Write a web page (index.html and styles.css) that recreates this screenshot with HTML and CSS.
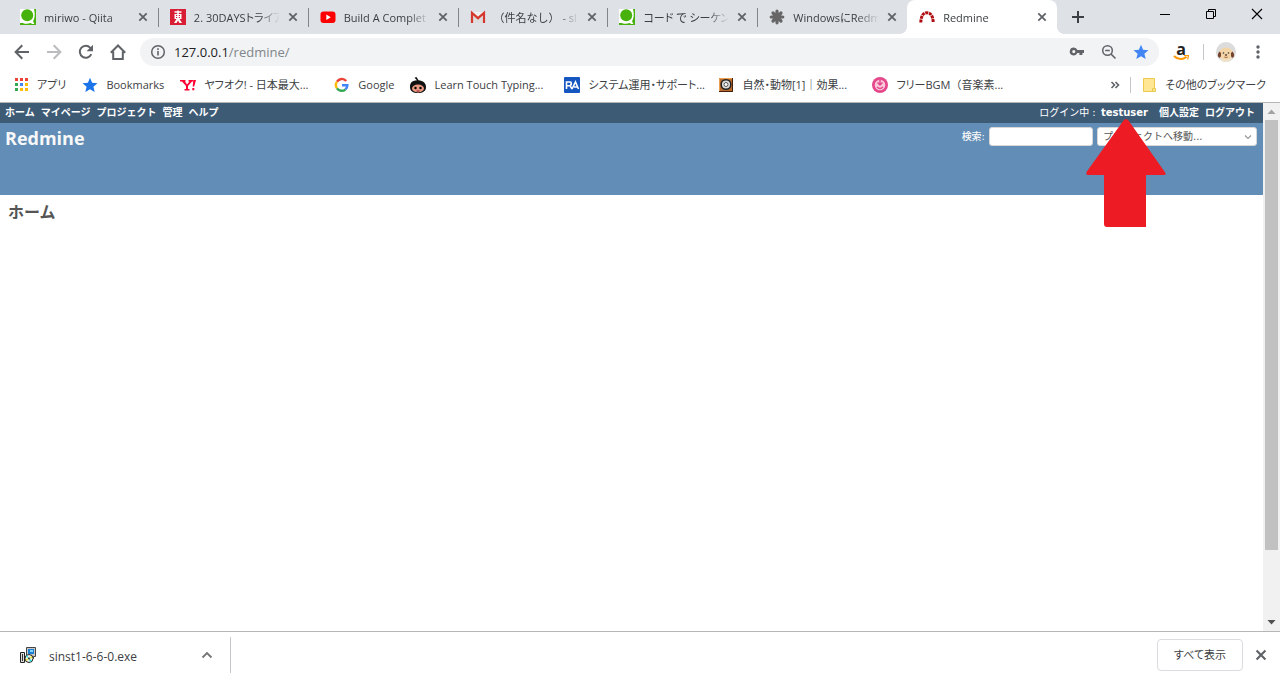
FILE: index.html
```html
<!DOCTYPE html>
<html lang="ja">
<head>
<meta charset="utf-8">
<title>Redmine</title>
<link rel="stylesheet" href="styles.css">
</head>
<body>
<svg class="defs" aria-hidden="true">
  <symbol id="x" viewBox="0 0 10 10"><path d="M1.3 1.3l7.4 7.4M8.7 1.3L1.3 8.7" fill="none" stroke="currentColor" stroke-width="1.8"/></symbol>
  <symbol id="qiita" viewBox="0 0 16 16"><path fill="#fff" d="M0 0h16v16H0z"/><circle cx="7.2" cy="6.2" r="6" fill="#47b20e"/><path fill="#47b20e" d="M14 0h2v16H0v-2h10.500l2 1 1.500-.8-1-2C14.500 10 15.500 6 14 0z"/><path fill="#fff" d="M1 12.500c4 2.500 8 2 10.500-.8l3 3.300h-2l-1.500-1.200c-4 1.800-8 1-10-1.300z"/></symbol>
  <symbol id="star" viewBox="0 0 16 16"><path d="M8 .8l2.100 4.900 5.400.5-4.100 3.500 1.300 5.300L8 12.200 3.300 15l1.300-5.300L.5 6.200l5.400-.5z"/></symbol>
</svg>

<header class="browser">
  <div class="tabstrip">
    <div class="tabs">
      <div class="tab"><svg class="icon"><use href="#qiita"/></svg><span class="tab-title">miriwo - Qiita</span><button class="close" aria-label="閉じる"><svg><use href="#x"/></svg></button></div>
      <div class="tab"><svg class="icon" viewBox="0 0 16 16"><path fill="#d81e34" d="M0 0h16v16H0z"/><path d="M8 1.500v5M4.500 3h7" fill="none" stroke="#fff" stroke-width="1.600"/><path fill="#fff" d="M4.500 5h7v5h-2l2.500 4h-2.500L8 11.500 6.500 14H4l2.500-4h-2z"/><path d="M6 6.500h1.200M8.800 6.500H10M6 8.500h1.200M8.800 8.500H10" stroke="#d81e34"/></svg><span class="tab-title">2. 30DAYSトライア</span><button class="close" aria-label="閉じる"><svg><use href="#x"/></svg></button></div>
      <div class="tab"><svg class="icon" viewBox="0 0 16 16"><rect x=".5" y="2.500" width="15" height="11.500" rx="3" fill="#f00"/><path fill="#fff" d="M6.300 5.500l4.500 2.700-4.500 2.700z"/></svg><span class="tab-title">Build A Complet</span><button class="close" aria-label="閉じる"><svg><use href="#x"/></svg></button></div>
      <div class="tab"><svg class="icon" viewBox="0 0 16 16"><path fill="#eee" d="M1 3h14v11H1z"/><path d="M3 5l5 4.500L13 5v9H3z" fill="#ddd"/><path d="M2 14V4l6 5.200L14 4v10" fill="none" stroke="#d5382f" stroke-width="2.200"/></svg><span class="tab-title"><span class="wide">（件名なし）</span> - sl</span><button class="close" aria-label="閉じる"><svg><use href="#x"/></svg></button></div>
      <div class="tab"><svg class="icon"><use href="#qiita"/></svg><span class="tab-title">コード で シーケンス</span><button class="close" aria-label="閉じる"><svg><use href="#x"/></svg></button></div>
      <div class="tab"><svg class="icon" viewBox="0 0 16 16"><path d="M8 8V2.200M8 8v5.800M8 8H2.200M8 8h5.800M8 8L4 4M8 8l4-4M8 8l-4 4M8 8l4 4" stroke="#666" stroke-width="3.200" stroke-linecap="round"/></svg><span class="tab-title">WindowsにRedm</span><button class="close" aria-label="閉じる"><svg><use href="#x"/></svg></button></div>
      <div class="tab active"><svg class="icon" viewBox="0 0 16 16"><path d="M1.800 13.500C2 7.500 4 3.700 8 3.700s6 3.800 6.200 9.800" fill="none" stroke="#b00d10" stroke-width="3" stroke-dasharray="3 .7"/></svg><span class="tab-title">Redmine</span><button class="close" aria-label="閉じる"><svg><use href="#x"/></svg></button></div>
    </div>
    <button class="new-tab" aria-label="新しいタブ"><svg viewBox="0 0 12 12"><path d="M6 0v12M0 6h12" stroke="#3c4043" stroke-width="2"/></svg></button>
    <div class="window-buttons">
      <button aria-label="最小化"><svg viewBox="0 0 12 12"><path d="M1 6.500h10" stroke="#000"/></svg></button>
      <button aria-label="元に戻す"><svg viewBox="0 0 12 12"><path d="M1.500 3.500h7v7h-7zM3.500 3.500v-2h7v7h-2" fill="none" stroke="#000"/></svg></button>
      <button aria-label="ウィンドウを閉じる"><svg viewBox="0 0 12 12"><path d="M1 1l10 10M11 1L1 11" stroke="#000" stroke-width="1.100"/></svg></button>
    </div>
  </div>

  <div class="toolbar">
    <div class="nav">
      <button aria-label="戻る"><svg viewBox="0 0 16 16"><path d="M15 8H2M8.300 1.300L1.600 8l6.700 6.700" fill="none" stroke="#5f6368" stroke-width="2"/></svg></button>
      <button aria-label="進む"><svg viewBox="0 0 16 16"><path d="M1 8h13M7.700 1.300L14.400 8l-6.700 6.700" fill="none" stroke="#babcbe" stroke-width="2"/></svg></button>
      <button aria-label="再読み込み"><svg viewBox="0 0 16 16"><path d="M13.300 10.200A6 6 0 1 1 12.300 3.800L13 4.600" fill="none" stroke="#5f6368" stroke-width="2"/><path d="M15 .8v6.400H8.600z" fill="#5f6368"/></svg></button>
      <button aria-label="ホーム"><svg viewBox="0 0 16 16"><path d="M.8 8.700L8 1.500l7.200 7.200M3.200 7.500V15h9.600V7.500" fill="none" stroke="#5f6368" stroke-width="2"/></svg></button>
    </div>
    <div class="omnibox">
      <svg class="info" viewBox="0 0 16 16"><circle cx="8" cy="8" r="6.300" fill="none" stroke="#5f6368" stroke-width="1.500"/><path d="M8 7v4.500M8 4.300v1.600" stroke="#5f6368" stroke-width="1.600"/></svg>
      <span class="url"><span class="host">127.0.0.1</span>/redmine/</span>
      <button aria-label="パスワード"><svg viewBox="0 0 16 16"><path d="M4.800 3.500a4 4 0 1 0 3.600 5.600h2v2h3v-2H15V6H8.400a4 4 0 0 0-3.600-2.500zm0 2.500a1.600 1.600 0 1 1 0 3.200 1.600 1.600 0 0 1 0-3.200z" fill="#5f6368"/></svg></button>
      <button aria-label="ズーム"><svg viewBox="0 0 16 16"><circle cx="6.500" cy="6.500" r="4.800" fill="none" stroke="#5f6368" stroke-width="1.500"/><path d="M4.200 6.500h4.600M10 10l4.500 4.500" stroke="#5f6368" stroke-width="1.600"/></svg></button>
      <button aria-label="ブックマーク"><svg fill="#4285f4"><use href="#star"/></svg></button>
    </div>
    <button class="extension" aria-label="Amazon"><span>a</span><svg viewBox="0 0 16 6"><path d="M1 1c4 4 9 4 12.500.8" fill="none" stroke="#f90" stroke-width="2"/><path d="M11 .5l4.500-.2-.8 4.200" fill="none" stroke="#f90" stroke-width="1.200"/></svg></button>
    <span class="divider"></span>
    <button class="avatar" aria-label="プロフィール"><svg viewBox="0 0 20 20"><circle cx="10" cy="10" r="10" fill="#dcdcdc"/><path d="M4 16h12l-2 3.200a10 10 0 0 1-8 0z" fill="#eee2cc"/><ellipse cx="10" cy="11.500" rx="7" ry="6" fill="#f3d5a8"/><path d="M3.500 9.500c-2 2-2.200 5-.5 6s2.300-2 2-4.500zM16.500 9.500c2 2 2.200 5 .5 6s-2.300-2-2-4.500z" fill="#75432a"/><circle cx="7.500" cy="11" r=".8" fill="#333"/><circle cx="12.500" cy="11" r=".8" fill="#333"/><ellipse cx="10" cy="13" rx="1.200" ry=".8" fill="#3b2922"/><path d="M8.300 15q1.700 1 3.400 0" fill="none" stroke="#a0683c"/></svg></button>
    <button class="menu" aria-label="メニュー"><svg viewBox="0 0 16 16" fill="#5f6368"><circle cx="8" cy="3" r="1.700"/><circle cx="8" cy="8" r="1.700"/><circle cx="8" cy="13" r="1.700"/></svg></button>
  </div>

  <nav class="bookmarks">
    <a href="#"><svg class="icon" viewBox="0 0 16 16"><path fill="#ea4335" d="M2 1h3v3H2zM7 1h3v3H7zM12 1h3v3h-3z"/><path fill="#34a853" d="M2 6h3v3H2zM2 11h3v3H2z"/><path fill="#4285f4" d="M7 6h3v3H7z"/><path fill="#fbbc05" d="M12 6h3v3h-3zM7 11h3v3H7zM12 11h3v3h-3z"/></svg><span>アプリ</span></a>
    <a href="#"><svg class="icon" fill="#1a73e8"><use href="#star"/></svg><span>Bookmarks</span></a>
    <a href="#" class="cut"><svg class="icon" viewBox="0 0 16 16" fill="#f03"><path d="M0 3h5.500v1.500H5l2 3 2.500-3H8.500V3H13v1.500h-1L8 9v3h1.500v1.500h-5V12H6V9L2 4.500H0zM13.300 3H16l-1.800 6.500h-1.500zM12.300 11h2v2.200h-2z"/></svg><span>ヤフオク! - 日本最大...</span></a>
    <a href="#"><svg class="icon" viewBox="0 0 16 16" fill="none" stroke-width="2.400"><path d="M3 4.700A5.600 5.600 0 0 1 12.200 4" stroke="#ea4335"/><path d="M3 4.700a5.600 5.600 0 0 0 0 6.600" stroke="#fbbc05"/><path d="M3 11.300a5.600 5.600 0 0 0 8.500 1" stroke="#34a853"/><path d="M11.500 12.300A5.600 5.600 0 0 0 13.400 8.200H8" stroke="#4285f4"/></svg><span>Google</span></a>
    <a href="#" class="cut"><svg class="icon" viewBox="0 0 16 16"><path d="M0 10C0 5 3 3.500 7 3.300L4.500.8 6.500 0l2 3.200C13 3.500 16 6 16 10c0 4-3 6-8 6s-8-2-8-6z" fill="#111"/><ellipse cx="8" cy="11.500" rx="6" ry="3.900" fill="#e89a80"/><circle cx="5.500" cy="11" r="1.200"/><circle cx="10.500" cy="11" r="1.200"/><path d="M6.500 14h3" stroke="#813"/></svg><span>Learn Touch Typing...</span></a>
    <a href="#" class="cut"><svg class="icon" viewBox="0 0 16 16"><rect width="16" height="16" rx="1" fill="#1556c0"/><path d="M2.500 12V5h4.200q1.500 2-.5 3.700H3M6 8.700L8 12M8 12l3.500-7 3 7M10 10h4" fill="none" stroke="#fff" stroke-width="1.600"/></svg><span>システム運用・サポート...</span></a>
    <a href="#" class="cut"><svg class="icon" viewBox="0 0 16 16"><path fill="#b8692b" d="M1 1h14v14H1z"/><path d="M1.500 15V1.500H15" fill="none" stroke="#e8a050"/><path d="M1 14.500h13.500V1" fill="none" stroke="#42200c"/><circle cx="8" cy="7.500" r="4.800" fill="#ddd" stroke="#222" stroke-width="1.500"/><circle cx="8" cy="7.500" r="2" fill="#fff" stroke="#555"/></svg><span>自然・動物[1]｜効果...</span></a>
    <a href="#" class="cut"><svg class="icon" viewBox="0 0 16 16"><circle cx="8" cy="8" r="8" fill="#e5488a"/><circle cx="8" cy="8" r="5.300" fill="#f9c9dc"/><path d="M8 3v4M5.500 5.500L8 8l2.500-2.500M5 10q3 3 6 0" fill="none" stroke="#e5488a" stroke-width="1.500"/></svg><span>フリーBGM<span class="wide">（</span>音楽素...</span></a>
    <span class="spacer"></span>
    <button class="more" aria-label="その他"><svg viewBox="0 0 10 10"><path d="M1.500 2l3 3-3 3M5.500 2l3 3-3 3" fill="none" stroke="#5f6368" stroke-width="1.600"/></svg></button>
    <span class="divider"></span>
    <a href="#"><svg class="icon" viewBox="0 0 16 16"><path d="M2.500 1.500h11v10h1v3h-12z" fill="#ffe694" stroke="#edc94e"/><path d="M11.500 14v-2.500h2" fill="none" stroke="#edc94e"/></svg><span>その他のブックマーク</span></a>
  </nav>
</header>

<div class="viewport">
  <div class="page">
    <div class="top-menu">
      <nav><a href="#">ホーム</a><a href="#">マイページ</a><a href="#">プロジェクト</a><a href="#">管理</a><a href="#">ヘルプ</a></nav>
      <div class="account"><span>ログイン中 : <a class="user" href="#">testuser<svg class="arrow" viewBox="0 0 80 108" aria-hidden="true"><path d="M40 0q1.500 0 2.500 1.500L79.500 54q.5 2-1 2H60v52H21q-3 0-3-3V56H1.500Q0 56 .5 53L37.500 1.500Q38.500 0 40 0z" fill="#ed1c24"/></svg></a></span><nav><a href="#">個人設定</a><a href="#">ログアウト</a></nav></div>
    </div>
    <div class="header">
      <h1>Redmine</h1>
      <form class="quick-search">
        <label for="q">検索:</label>
        <input id="q" type="text">
        <select aria-label="プロジェクト"><option>プロジェクトへ移動...</option></select>
      </form>
    </div>
    <main><h2>ホーム</h2></main>
  </div>
  <div class="scrollbar" aria-hidden="true">
    <svg viewBox="0 0 17 17"><path d="M4.500 11h8l-4-4.500z" fill="#a3a3a3"/></svg>
    <div class="track"><div class="thumb"></div></div>
    <svg viewBox="0 0 17 17"><path d="M4.500 6h8l-4 4.500z" fill="#505050"/></svg>
  </div>
</div>

<footer class="downloads">
  <div class="item">
    <svg class="icon" viewBox="0 0 16 16"><path d="M6.500.5h9v9h-2v2h-5l-2-2z" fill="#c8c8c8" stroke="#444"/><path d="M8 2h6v5H8z" fill="#1b7fd4"/><path d="M10 3h3v2h-3z" fill="#7fd3ff"/><path d="M.5 5.500h4v10h-4z" fill="#ddd" stroke="#222"/><path d="M2 7h1v7H2z" fill="#333"/><circle cx="9" cy="11.500" r="4" fill="#eee" stroke="#222"/><path d="M9 11.500l-3-2 1-1.500zM9 11.500l3 2-2 1.500z" fill="#1ee0dc"/><path d="M9 11.500l2.500-2.500 1 2zM9 11.500l-2.500 2.500-1-2z" fill="#e8e520"/><circle cx="9" cy="11.500" r="1" fill="#333"/></svg>
    <span class="file">sinst1-6-6-0.exe</span>
    <button aria-label="オプション"><svg viewBox="0 0 12 12"><path d="M1.500 8.500L6 4l4.500 4.500" fill="none" stroke="#757575" stroke-width="1.800"/></svg></button>
  </div>
  <button class="show-all">すべて表示</button>
  <button class="close dismiss" aria-label="閉じる"><svg><use href="#x"/></svg></button>
</footer>
</body>
</html>
```

FILE: styles.css
```css
* { box-sizing: border-box; }
body {
  margin: 0;
  min-height: 100vh;
  display: flex;
  flex-direction: column;
  background: #fff;
  color: #3c4043;
  font: 11px/16px "Open Sans", "Noto Sans CJK JP", sans-serif;
}
a { color: inherit; text-decoration: none; }
button { padding: 0; border: 0; background: none; color: inherit; font: inherit; display: grid; place-items: center; }
svg { display: block; width: 16px; height: 16px; flex: none; }
.defs { position: absolute; width: 0; height: 0; }
.browser, .downloads { font-feature-settings: "palt"; }
.wide { font-feature-settings: normal; }
.spacer { flex: 1; }
.divider { width: 1px; height: 16px; background: #c4c6c9; }

.tabstrip { display: flex; height: 34px; padding-left: 8px; background: #dee1e6; }
.tabs { display: flex; flex: 0 1 1049px; min-width: 0; }
.tab { flex: 1 1 0; min-width: 0; display: flex; align-items: center; gap: 8px; padding: 0 10px 0 12px; position: relative; }
.tab:not(.active)::after { content: ""; position: absolute; right: -1px; top: 8px; width: 1px; height: 19px; background: #80868b; }
.tab:nth-last-child(2)::after { display: none; }
.tab-title {
  flex: 1; min-width: 0; padding-top: 2px; overflow: hidden; white-space: nowrap;
  -webkit-mask-image: linear-gradient(to right, #000 75%, transparent);
  mask-image: linear-gradient(to right, #000 75%, transparent);
}
.tab.active { background: #fff; border-radius: 8px 8px 0 0; }
.tab.active::before, .tab.active::after { content: ""; position: absolute; top: auto; bottom: 0; width: 8px; height: 8px; }
.tab.active::before { left: -8px; background: radial-gradient(circle at 0 0, #dee1e6 8px, #fff 8px); }
.tab.active::after { right: -8px; background: radial-gradient(circle at 100% 0, #dee1e6 8px, #fff 8px); }
.close svg { width: 10px; height: 10px; color: #5f6368; }
.new-tab { width: 42px; }
.new-tab svg, .window-buttons svg { width: 12px; height: 12px; }
.window-buttons { display: flex; margin-left: auto; height: 28px; }
.window-buttons button { width: 46px; }

.toolbar { display: flex; align-items: center; height: 36px; padding-right: 14px; }
.nav { display: flex; padding: 0 14px; gap: 16px; }
.omnibox { flex: 1; display: flex; align-items: center; gap: 16px; height: 28px; padding: 0 10px; border-radius: 14px; background: #f1f3f4; }
.url { flex: 1; margin-left: -8px; font-size: 13px; line-height: 20px; color: #80868b; }
.host { color: #202124; }
.extension { margin: 0 14px; width: 16px; font-weight: 700; font-size: 16px; line-height: 12px; color: #222; }
.extension svg { height: 6px; }
.avatar { margin: 0 14px 0 12px; }
.avatar svg { width: 20px; height: 20px; }

.bookmarks { display: flex; align-items: center; gap: 16px; height: 32px; padding: 0 14px 2px 13px; white-space: nowrap; }
.bookmarks a { display: flex; align-items: center; gap: 8px; }
.cut > span { width: 114px; }
.more svg { width: 10px; height: 10px; }
.bookmarks .divider { margin: 0 -6px; }

.viewport { flex: 1; display: flex; border-top: 1px solid #b6b6b6; border-bottom: 1px solid #b6b6b6; }
.page { flex: 1; font-family: "DejaVu Sans", "Noto Sans CJK JP", sans-serif; font-size: 10px; }
.top-menu { display: flex; justify-content: space-between; align-items: center; height: 20px; padding: 0 8px 0 5px; background: #3e5b76; color: #fff; }
.top-menu nav { display: flex; gap: 6px; }
.top-menu a { font-weight: 700; }
.account { display: flex; gap: 11px; }
.user { position: relative; margin-left: 2px; }
.arrow { position: absolute; z-index: 1; top: 12px; left: -15px; width: 80px; height: 108px; }
.header { display: flex; justify-content: space-between; align-items: flex-start; height: 72px; padding: 4px 6px 0 5px; background: #628db6; color: #f8f8f8; }
h1 { margin: 0; font: 700 18px/22px "Open Sans", sans-serif; }
.quick-search { display: flex; align-items: center; gap: 4px; }
.quick-search label { font-weight: 500; }
.quick-search input { width: 104px; height: 19px; border: 1px solid #d7d7d7; border-radius: 3px; padding: 0 4px; }
.quick-search select {
  appearance: none; width: 160px; height: 19px; padding: 0 5px; border: 1px solid #d7d7d7; border-radius: 3px;
  color: #555; font: inherit;
  background: #fff url("data:image/svg+xml,%3Csvg xmlns='http://www.w3.org/2000/svg' viewBox='0 0 8 8'%3E%3Cpath d='M1 2.500l3 3 3-3' fill='none' stroke='%23999' stroke-width='1.200'/%3E%3C/svg%3E") no-repeat right 4px center / 8px 8px;
}
main { padding: 6px 8px; }
h2 { margin: 0; font-size: 16px; line-height: 24px; color: #555; }

.scrollbar { width: 17px; display: flex; flex-direction: column; background: #f1f1f1; }
.scrollbar svg { width: 17px; height: 17px; }
.track { flex: 1; padding: 0 2px; }
.thumb { height: 87%; background: #c1c1c1; }

.downloads { display: flex; align-items: center; height: 48px; padding: 0 13px 2px 20px; }
.item { display: flex; align-items: center; height: 36px; width: 211px; padding-right: 17px; border-right: 1px solid #c4c6c9; }
.file { flex: 1; margin-left: 13px; padding-top: 4px; font-size: 12px; }
.item button svg { width: 12px; height: 12px; }
.show-all { margin-left: auto; width: 86px; height: 32px; border: 1px solid #dadce0; border-radius: 4px; }
.dismiss { margin-left: 12px; }
.dismiss svg { width: 12px; height: 12px; }
```
